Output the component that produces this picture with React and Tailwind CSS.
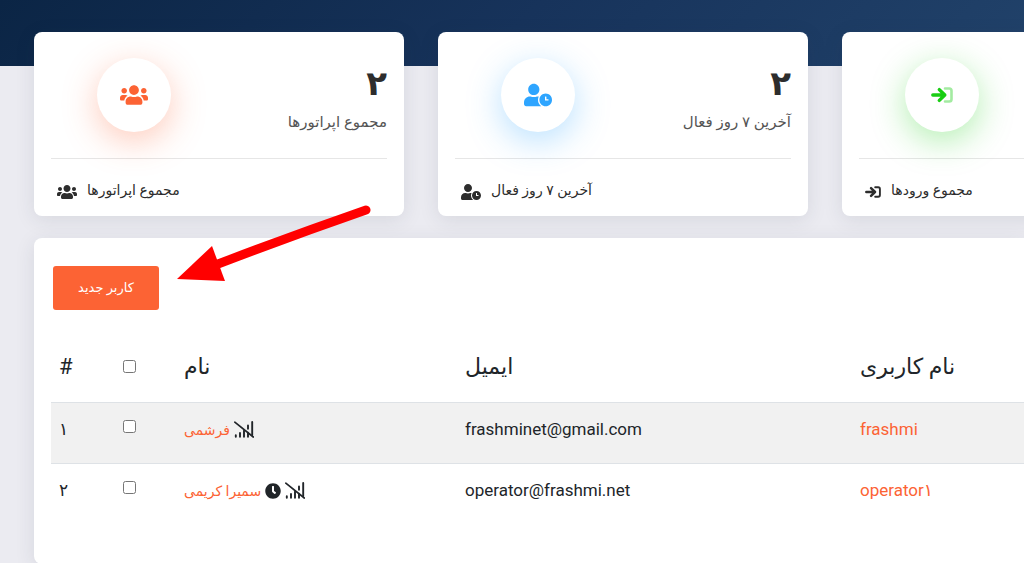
import clsx from 'clsx';
import { FaClock, FaUserClock, FaUsers } from 'react-icons/fa';

function SignInIcon({ className, duotone }) {
  return (
    <svg viewBox="0 0 22 16" fill="none" strokeLinecap="round" strokeLinejoin="round" className={className}>
      <path
        d="M14 1.5h4.2a2.3 2.3 0 0 1 2.3 2.3v8.4a2.3 2.3 0 0 1-2.3 2.3H14"
        stroke="currentColor"
        strokeWidth="2.6"
        opacity={duotone ? 0.4 : 1}
      />
      <path d="M1.8 8h12M8.3 2.6 13.8 8l-5.5 5.4" stroke="currentColor" strokeWidth="3.4" />
    </svg>
  );
}

function SignalSlashIcon({ className }) {
  return (
    <svg viewBox="0 0 20 17" fill="none" stroke="currentColor" strokeLinecap="round" className={className}>
      <path d="M1.8 14.2v1.6M6 12v3.8M10 9.8v6M14 11.8v4M14 4.4v3.4M18.2 1v13" strokeWidth="1.9" />
      <path d="M.8 1.2 19.3 16" strokeWidth="1.7" />
    </svg>
  );
}

const cards = [
  {
    label: 'مجموع اپراتورها',
    value: '۲',
    tone: 'text-[#fc6334] shadow-[0_9px_34px_rgba(252,99,52,0.34)]',
    icon: <FaUsers className="size-7" />,
    smallIcon: <FaUsers className="size-5" />,
  },
  {
    label: 'آخرین ۷ روز فعال',
    value: '۲',
    tone: 'text-[#2ea5ff] shadow-[0_9px_34px_rgba(46,165,255,0.34)]',
    icon: <FaUserClock className="size-7" />,
    smallIcon: <FaUserClock className="size-5" />,
  },
  {
    label: 'مجموع ورودها',
    tone: 'text-[#1acd14] shadow-[0_9px_34px_rgba(26,205,20,0.34)]',
    icon: <SignInIcon duotone className="h-4 w-6" />,
    smallIcon: <SignInIcon className="h-3 w-4" />,
  },
];

const users = [
  { id: '۱', name: 'فرشمی', email: 'frashminet@gmail.com', username: 'frashmi', pending: false },
  { id: '۲', name: 'سمیرا کریمی', email: 'operator@frashmi.net', username: 'operator۱', pending: true },
];

function StatCard({ card }) {
  return (
    <section className="rounded-lg bg-white px-[17px] shadow-[0_4px_20px_rgba(40,45,70,0.1)]">
      <div className="flex h-[127px] items-center justify-between border-b border-[#e6e6e6] pl-[46px]">
        <div className={clsx('flex size-[74px] items-center justify-center rounded-full bg-white', card.tone)}>
          {card.icon}
        </div>
        {card.value && (
          <div dir="rtl" className="pt-1">
            <p className="text-[34px] leading-[50px] font-bold text-[#2d2d2d]">{card.value}</p>
            <p className="text-[15px] leading-7 text-[#555]">{card.label}</p>
          </div>
        )}
      </div>
      <div className="flex h-[57px] items-center gap-2.5 pt-2 pl-1.5 text-[#2d2d2d]">
        {card.smallIcon}
        <span dir="rtl" className="pb-1 text-sm">{card.label}</span>
      </div>
    </section>
  );
}

function UsersTable() {
  return (
    <table className="w-full table-fixed text-left text-[#212529]">
      <colgroup>
        <col className="w-[62px]" />
        <col className="w-[71px]" />
        <col className="w-[281px]" />
        <col className="w-[395px]" />
        <col />
      </colgroup>
      <thead className="text-[22px]">
        <tr className="h-[70px]">
          <th className="pl-2 font-normal">#</th>
          <th className="pl-2.5">
            <input type="checkbox" aria-label="انتخاب همه" className="block size-[13px]" />
          </th>
          <th className="font-normal">نام</th>
          <th className="font-normal">ایمیل</th>
          <th className="font-normal">نام کاربری</th>
        </tr>
      </thead>
      <tbody className="text-[17px]">
        {users.map((user) => (
          <tr key={user.id} className="h-[61px] border-t border-[#dee2e6] odd:bg-[#f1f1f1]">
            <td className="pb-1.5 pl-2">{user.id}</td>
            <td className="pb-3 pl-2.5">
              <input type="checkbox" aria-label={user.name} className="block size-[13px]" />
            </td>
            <td className="pb-1.5">
              <div className="flex items-center gap-1">
                <a href="#" className="text-sm text-[#fc6334]">{user.name}</a>
                {user.pending && <FaClock className="size-4" />}
                <SignalSlashIcon className="h-[17px] w-5" />
              </div>
            </td>
            <td className="pb-1.5">{user.email}</td>
            <td className="pb-1.5">
              <a href="#" className="text-[#fc6334]">{user.username}</a>
            </td>
          </tr>
        ))}
      </tbody>
    </table>
  );
}

export default function App() {
  return (
    <div className="relative min-h-screen overflow-hidden bg-[#ebebf1] font-['Roboto','DejaVu_Sans',sans-serif]">
      <header className="h-[66px] bg-linear-135 from-[#0b2545] via-[#17335b] to-[#21426a]" />

      <main className="-mt-[34px] pl-[34px]">
        <div className="grid auto-cols-[370px] grid-flow-col gap-[34px]">
          {cards.map((card) => (
            <StatCard key={card.label} card={card} />
          ))}
        </div>

        <section className="mt-[22px] rounded-l-lg bg-white pt-7 pb-10 pl-[17px] shadow-[0_4px_20px_rgba(40,45,70,0.1)]">
          <button
            type="button"
            className="ml-0.5 h-11 w-[106px] rounded-[3px] bg-[#fc6334] text-[13px] font-medium text-white"
          >
            کاربر جدید
          </button>
          <div className="mt-[22px]">
            <UsersTable />
          </div>
        </section>
      </main>

      {/* Pointer to the "new user" button */}
      <svg
        viewBox="0 0 200 82"
        aria-hidden="true"
        className="pointer-events-none absolute top-[203px] left-[174px] h-[82px] w-[200px]"
      >
        <path d="M192 7Q120 32 44 61" fill="none" stroke="#f00" strokeWidth="9" strokeLinecap="round" />
        <path d="M3 76 38 43 51 78Z" fill="#f00" />
      </svg>
    </div>
  );
}
